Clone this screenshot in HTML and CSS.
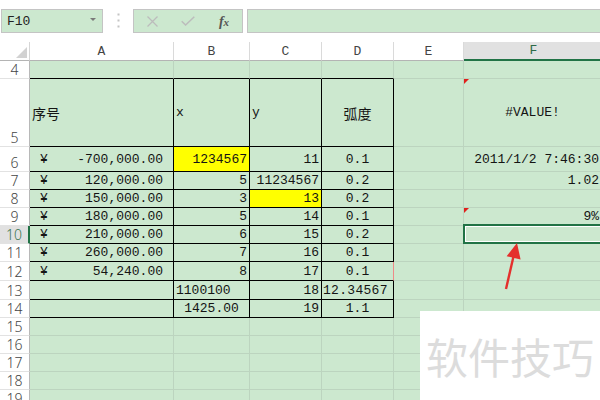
FILE: index.html
```html
<!DOCTYPE html>
<html>
<head>
<meta charset="utf-8">
<link rel="stylesheet" href="styles.css">
</head>
<body>
<div class="topbar">
  <div class="namebox"><span>F10</span><span class="dd"></span></div>
  <div class="sep"><svg width="3" height="15" viewBox="0 0 3 15"><rect x="0.5" y="0.5" width="2" height="2" fill="#c4c4c4"/><rect x="0.5" y="6.5" width="2" height="2" fill="#c4c4c4"/><rect x="0.5" y="12.5" width="2" height="2" fill="#c4c4c4"/></svg></div>
  <div class="fxbox">
    <div class="slot"><svg width="11" height="11" viewBox="0 0 11 11"><path d="M0.5 0.5L10.5 10.5M10.5 0.5L0.5 10.5" stroke="#bcbcbc" stroke-width="1.3" fill="none"/></svg></div>
    <div class="slot"><svg width="14" height="10" viewBox="0 0 14 10"><path d="M0.7 5.2L4.6 9L13.3 0.7" stroke="#bcbcbc" stroke-width="1.5" fill="none"/></svg></div>
    <div class="slot fx"><span class="f">f</span><span class="x">x</span></div>
  </div>
  <div class="fbar"></div>
</div>

<div class="sheet">
  <div class="corner"><span class="ctri"></span></div>
  <div class="ch">A</div>
  <div class="ch">B</div>
  <div class="ch">C</div>
  <div class="ch">D</div>
  <div class="ch">E</div>
  <div class="ch sel">F</div>

  <div class="rh">4</div>
  <div class="c bb"></div><div class="c bb"></div><div class="c bb"></div><div class="c bb"></div><div class="c"></div><div class="c"></div>

  <div class="rh">5</div>
  <div class="c t cjk">序号</div>
  <div class="c t">x</div>
  <div class="c t">y</div>
  <div class="c t ctr cjk">弧度</div>
  <div class="c"></div>
  <div class="c ctr f"><span class="note"></span>#VALUE!</div>

  <div class="rh">6</div>
  <div class="c t acc"><span>¥</span><span>-700,000.00</span></div>
  <div class="c t r yel">1234567</div>
  <div class="c t r">11</div>
  <div class="c t ctr">0.1</div>
  <div class="c"></div>
  <div class="c r f">2011/1/2 7:46:30</div>

  <div class="rh">7</div>
  <div class="c t acc"><span>¥</span><span>120,000.00</span></div>
  <div class="c t r">5</div>
  <div class="c t r">11234567</div>
  <div class="c t ctr">0.2</div>
  <div class="c"></div>
  <div class="c r f">1.02</div>

  <div class="rh">8</div>
  <div class="c t acc"><span>¥</span><span>150,000.00</span></div>
  <div class="c t r">3</div>
  <div class="c t r yel">13</div>
  <div class="c t ctr">0.2</div>
  <div class="c"></div>
  <div class="c f"></div>

  <div class="rh">9</div>
  <div class="c t acc"><span>¥</span><span>180,000.00</span></div>
  <div class="c t r">5</div>
  <div class="c t r">14</div>
  <div class="c t ctr">0.1</div>
  <div class="c"></div>
  <div class="c r f"><span class="note"></span>9%</div>

  <div class="rh sel">10</div>
  <div class="c t acc"><span>¥</span><span>210,000.00</span></div>
  <div class="c t r">6</div>
  <div class="c t r">15</div>
  <div class="c t ctr">0.2</div>
  <div class="c"></div>
  <div class="c f active"></div>

  <div class="rh">11</div>
  <div class="c t acc"><span>¥</span><span>260,000.00</span></div>
  <div class="c t r">7</div>
  <div class="c t r">16</div>
  <div class="c t ctr">0.1</div>
  <div class="c"></div>
  <div class="c f"></div>

  <div class="rh">12</div>
  <div class="c t acc"><span>¥</span><span>54,240.00</span></div>
  <div class="c t r">8</div>
  <div class="c t r">17</div>
  <div class="c t ctr red-edge">0.1</div>
  <div class="c"></div>
  <div class="c f"></div>

  <div class="rh">13</div>
  <div class="c t"></div>
  <div class="c t">1100100</div>
  <div class="c t r">18</div>
  <div class="c t tight">12.34567</div>
  <div class="c"></div>
  <div class="c f"></div>

  <div class="rh">14</div>
  <div class="c t"></div>
  <div class="c t ctr">1425.00</div>
  <div class="c t r">19</div>
  <div class="c t ctr">1.1</div>
  <div class="c"></div>
  <div class="c f"></div>

  <div class="rh">15</div>
  <div class="c"></div><div class="c"></div><div class="c"></div><div class="c"></div><div class="c"></div><div class="c"></div>
  <div class="rh">16</div>
  <div class="c"></div><div class="c"></div><div class="c"></div><div class="c"></div><div class="c"></div><div class="c"></div>
  <div class="rh">17</div>
  <div class="c"></div><div class="c"></div><div class="c"></div><div class="c"></div><div class="c"></div><div class="c"></div>
  <div class="rh">18</div>
  <div class="c"></div><div class="c"></div><div class="c"></div><div class="c"></div><div class="c"></div><div class="c"></div>
  <div class="rh">19</div>
  <div class="c"></div><div class="c"></div><div class="c"></div><div class="c"></div><div class="c"></div><div class="c"></div>
</div>

<svg class="arrow" width="600" height="400" viewBox="0 0 600 400">
  <line x1="506" y1="289" x2="513.6" y2="256" stroke="#e4302d" stroke-width="2.4"/>
  <polygon points="517,243 506.6,256.2 520.6,259.4" fill="#e4302d"/>
</svg>

<div class="watermark">软件技巧</div>
</body>
</html>
```

FILE: styles.css
```css
body {
  margin: 0;
  width: 600px;
  height: 400px;
  overflow: hidden;
  position: relative;
  background: #ffffff;
  font-family: "Liberation Mono", "DejaVu Sans Mono", monospace;
}

/* ---------- top bar ---------- */
.topbar {
  height: 42px;
  box-sizing: border-box;
  padding-top: 9px;
  display: flex;
  align-items: flex-start;
}
.namebox {
  margin-left: 1px;
  width: 102px;
  height: 24px;
  box-sizing: border-box;
  border: 1px solid #c4c4c4;
  background: #cce8cf;
  display: flex;
  align-items: center;
  justify-content: space-between;
  padding: 0 6px 0 5px;
  font-size: 13px;
  color: #222;
}
.dd {
  width: 0;
  height: 0;
  border-left: 3px solid transparent;
  border-right: 3px solid transparent;
  border-top: 3px solid #7a7a7a;
  margin-top: -3px;
}
.sep {
  width: 30px;
  display: flex;
  justify-content: center;
  padding-top: 4px;
}
.fxbox {
  width: 110px;
  height: 24px;
  box-sizing: border-box;
  border: 1px solid #c4c4c4;
  background: #cce8cf;
  display: flex;
}
.slot {
  width: 36px;
  display: flex;
  align-items: center;
  justify-content: center;
}
.fx {
  font-family: "Liberation Serif", serif;
  font-style: italic;
  font-weight: bold;
  color: #555;
  align-items: baseline;
  padding-top: 4px;
  box-sizing: border-box;
}
.fx .f { font-size: 14px; }
.fx .x { font-size: 11px; }
.fbar {
  flex: 1;
  margin-left: 4px;
  margin-right: -3px;
  height: 24px;
  box-sizing: border-box;
  border: 1px solid #c4c4c4;
  background: #cce8cf;
}

/* ---------- sheet ---------- */
.sheet {
  display: grid;
  grid-template-columns: 30px 144px 76px 72px 72px 70px 140px;
  grid-template-rows: 19px 18px 68px 25px 18px 18px 18px 18px 18px 19px 19px 18px repeat(5, 18px);
}
.sheet > div {
  box-sizing: border-box;
  display: flex;
  align-items: center;
  white-space: nowrap;
  min-width: 0;
}
.corner {
  background: #fff;
  border-right: 1px solid #d6d6d6;
  border-bottom: 1px solid #b4b4b4;
  position: relative;
}
.ctri {
  position: absolute;
  left: 16px;
  top: 5px;
  width: 0;
  height: 0;
  border-left: 11px solid transparent;
  border-bottom: 11px solid #d2d2d2;
}
.ch {
  background: #fff;
  border-right: 1px solid #dadada;
  border-bottom: 1px solid #b4b4b4;
  justify-content: center;
  font-size: 13px;
  color: #444;
}
.ch.sel {
  background: #e1e1e1;
  color: #2d6a47;
  border-bottom: 2px solid #217346;
}
.rh {
  background: #fff;
  border-right: 1px solid #b8b8b8;
  border-bottom: 1px solid #e2e2e2;
  justify-content: center;
  align-items: flex-end !important;
  font-family: "Noto Sans", "Liberation Sans", sans-serif;
  font-weight: 300;
  font-size: 14px;
  line-height: 14px;
  padding-bottom: 1px;
  color: #444;
}
.rh.sel {
  background: #e1e1e1;
  color: #3a7552;
  border-right: 2px solid #217346;
}

.c {
  background: #cce8cf;
  border-right: 1px solid #bcd4bf;
  border-bottom: 1px solid #bcd4bf;
  font-size: 13px;
  color: #141414;
  padding: 0 2px 0 2px;
}
.c.bb { border-bottom-color: #000; }
.c.t {
  border-right-color: #000;
  border-bottom-color: #000;
}
.c.r { justify-content: flex-end; }
.c.ctr { justify-content: center; }
.c.yel { background: #ffff00; }
.c.acc {
  justify-content: space-between;
  padding: 0 10px 0 10px;
}
.c.cjk {
  font-family: "Noto Sans CJK SC", "Noto Sans", sans-serif;
  font-size: 14px;
}
.c.tight { padding-left: 1px; letter-spacing: 0.3px; }
.c.red-edge { border-right-color: #ee8a88; }
.c.f {
  position: relative;
  padding-right: 4px;
}
.note {
  position: absolute;
  left: 0;
  top: 0;
  width: 0;
  height: 0;
  border-top: 5px solid #e0201c;
  border-right: 5px solid transparent;
}
.c.active::after {
  content: "";
  position: absolute;
  left: -1px;
  top: -2px;
  right: -1px;
  bottom: -1px;
  border: 2px solid #217346;
  box-shadow: inset 0 0 0 1px #ffffff;
}

/* ---------- overlays ---------- */
.arrow {
  position: absolute;
  left: 0;
  top: 0;
}
.watermark {
  position: absolute;
  left: 420px;
  top: 311px;
  width: 180px;
  height: 89px;
  background: #ffffff;
  display: flex;
  align-items: center;
  padding-left: 6px;
  box-sizing: border-box;
  font-family: "Noto Sans CJK SC", sans-serif;
  font-size: 42px;
  color: #dcdcdc;
  white-space: nowrap;
}
```
